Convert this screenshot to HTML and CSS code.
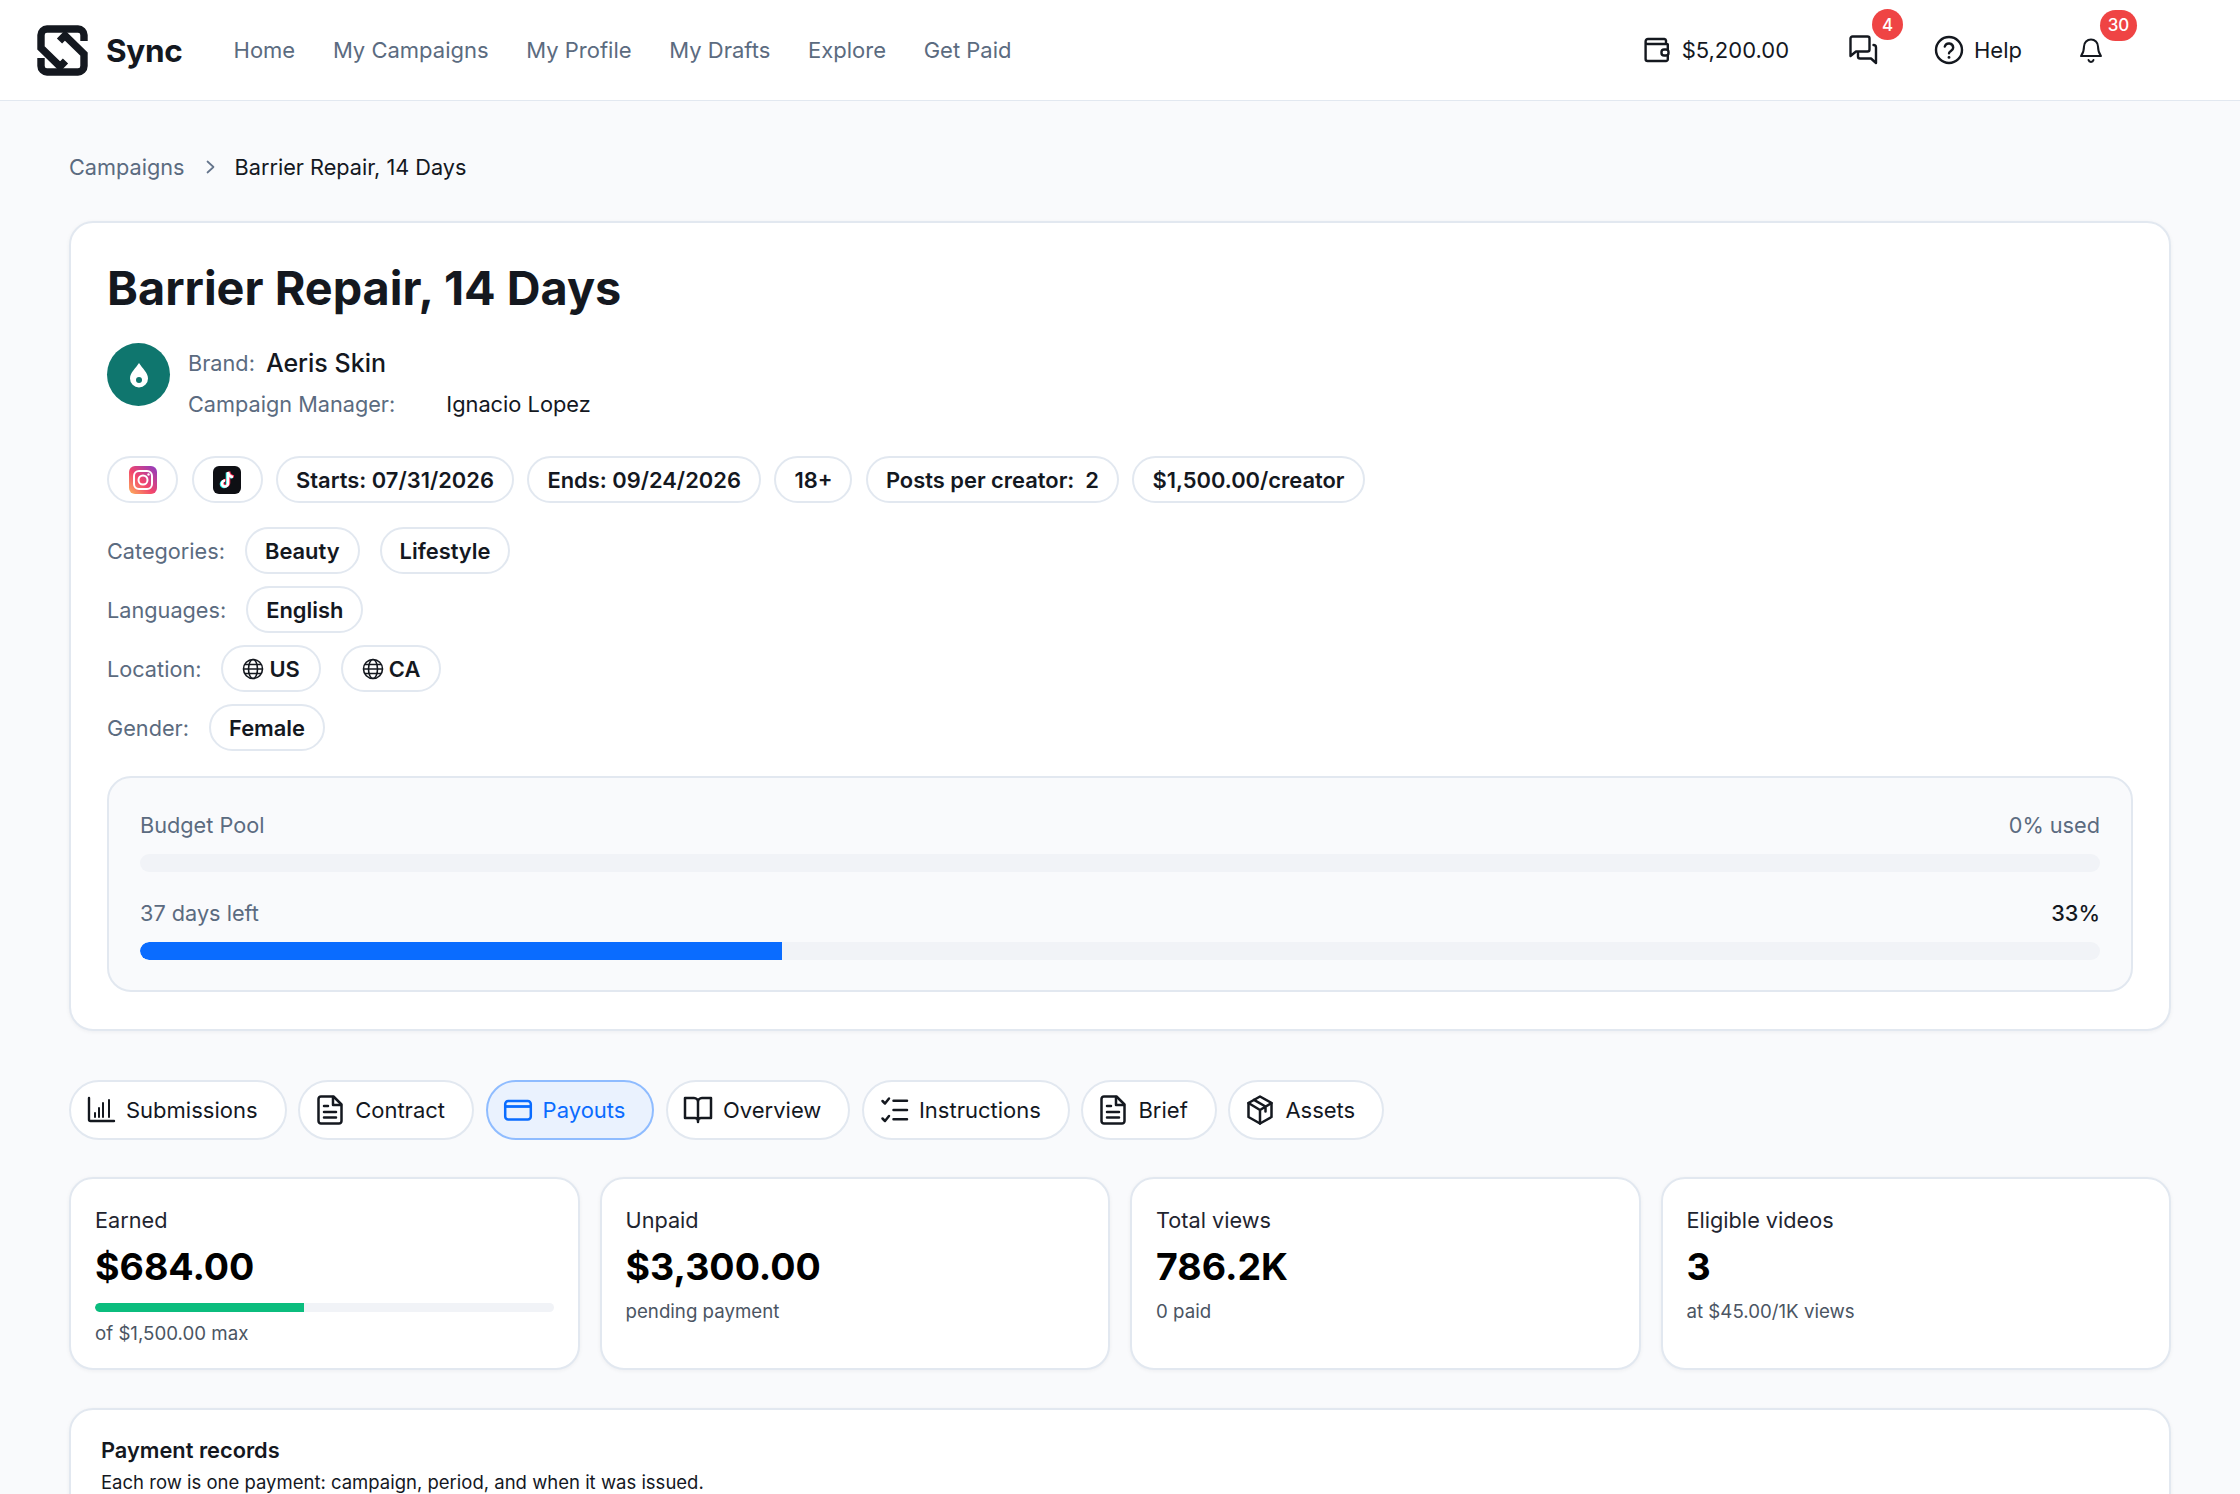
FILE: index.html
```html
<!DOCTYPE html>
<html lang="en">
<head>
<meta charset="utf-8">
<title>Barrier Repair, 14 Days</title>
<link rel="stylesheet" href="styles.css">
</head>
<body>
<header class="topbar">
  <a class="brand">
    <svg class="logo" viewBox="0 0 51 51" fill="none" stroke="#14181f" stroke-width="7.400" stroke-linejoin="miter"><path d="M47 16V10a6 6 0 0 0-6-6H10a6 6 0 0 0-6 6v13l19 18.500 5.500-5.500"/><path d="M4 33v8a6 6 0 0 0 6 6h31a6 6 0 0 0 6-6V29L28 10.500l-5.500 5.500"/></svg>
    <span>Sync</span>
  </a>
  <nav class="nav"><a>Home</a><a>My Campaigns</a><a>My Profile</a><a>My Drafts</a><a>Explore</a><a>Get Paid</a></nav>
  <div class="tools">
    <div class="tool wallet">
      <svg class="ico-w" viewBox="0 0 26 26" fill="none" stroke="#14181f" stroke-width="2.400" stroke-linejoin="round" stroke-linecap="round"><path d="M22 7V3.500A1.800 1.800 0 0 0 20 2H4a2.400 2.400 0 0 0-2.400 2.400V22a2 2 0 0 0 2 2H22a1.800 1.800 0 0 0 1.800-1.800V7.500A.8.800 0 0 0 23 7H3.600A2 2 0 0 1 1.600 4.600"/><rect x="17.500" y="12.500" width="7" height="6" rx="2.600" fill="#fff"/></svg>
      <span>$5,200.00</span>
    </div>
    <div class="tool chat">
      <svg class="ico-c" viewBox="0 0 30 30" fill="none" stroke="#14181f" stroke-width="2.400" stroke-linejoin="round" stroke-linecap="round"><path d="M4.500 1.500H19.500a2 2 0 0 1 2 2V14.500a2 2 0 0 1-2 2H8L2.500 21V3.500a2 2 0 0 1 2-2Z"/><path d="M25.500 10a2.500 2.500 0 0 1 2.500 2.500V28L23 23.500H12a2 2 0 0 1-2-2V18"/></svg>
      <span class="badge">4</span>
    </div>
    <div class="tool help">
      <svg class="ico-h" viewBox="0 0 30 30" fill="none" stroke="#14181f" stroke-width="2.400" stroke-linecap="round"><circle cx="15" cy="15" r="13"/><path d="M10.800 11.500a4.300 4.300 0 0 1 8.400 1.200c0 2.900-4.200 3.400-4.200 5.600"/><path d="M15 22.300v.1" stroke-width="2.800"/></svg>
      <span>Help</span>
    </div>
    <div class="tool bell">
      <svg class="ico-b" viewBox="0 0 24 25" fill="none" stroke="#14181f" stroke-width="2" stroke-linejoin="round" stroke-linecap="round"><path d="M12 1.500a7 7 0 0 0-7 7c0 5.500-1 7-3 9.500h20c-2-2.500-3-4-3-9.500a7 7 0 0 0-7-7Z"/><path d="M9.500 22a2.600 2.600 0 0 0 5 0"/></svg>
      <span class="badge wide">30</span>
    </div>
  </div>
</header>

<main class="page">
  <div class="crumbs">
    <span class="crumb-root">Campaigns</span>
    <svg class="crumb-sep" viewBox="0 0 9 14" fill="none" stroke="#64748b" stroke-width="1.700" stroke-linecap="round" stroke-linejoin="round"><path d="M1.500 1.500 7.500 7l-6 5.500"/></svg>
    <span class="crumb-cur">Barrier Repair, 14 Days</span>
  </div>

  <section class="card hero">
    <h1>Barrier Repair, 14 Days</h1>
    <div class="owner">
      <div class="avatar">
        <svg viewBox="0 0 20 26" width="20" height="26"><path d="M10 1c3 5 9 9.500 9 15.500a9 9 0 0 1-18 0C1 10.500 7 6 10 1Z" fill="#fff"/><circle cx="10" cy="18" r="3" fill="#0f766e"/></svg>
      </div>
      <div class="owner-text">
        <div class="owner-line"><span class="muted">Brand:</span><strong class="brand-name">Aeris Skin</strong></div>
        <div class="owner-line"><span class="muted">Campaign Manager:</span><span class="manager">Ignacio Lopez</span></div>
      </div>
    </div>

    <div class="chips">
      <span class="chip social">
        <svg viewBox="0 0 28 28" width="28" height="28"><defs><linearGradient id="ig" x1="0" y1="1" x2="1" y2="0"><stop offset="0" stop-color="#fdb35c"/><stop offset=".45" stop-color="#f2456c"/><stop offset="1" stop-color="#8a3ac4"/></linearGradient></defs><rect width="28" height="28" rx="6" fill="url(#ig)"/><rect x="5" y="5" width="18" height="18" rx="5" fill="none" stroke="#fff" stroke-width="2"/><circle cx="14" cy="14" r="4.500" fill="none" stroke="#fff" stroke-width="2"/><circle cx="19.500" cy="8.500" r="1.200" fill="#fff"/></svg>
      </span>
      <span class="chip social">
        <svg viewBox="0 0 28 28" width="28" height="28"><rect width="28" height="28" rx="6" fill="#0e0f14"/><path d="M15 6v11.500a3 3 0 1 1-3-3M15 6c.3 3 2.300 4.700 5 5" transform="translate(-1 .5)" fill="none" stroke="#25f4ee" stroke-width="2.600"/><path d="M15 6v11.500a3 3 0 1 1-3-3M15 6c.3 3 2.300 4.700 5 5" transform="translate(1 -.5)" fill="none" stroke="#fe2c55" stroke-width="2.600"/><path d="M15 6v11.500a3 3 0 1 1-3-3M15 6c.3 3 2.300 4.700 5 5" fill="none" stroke="#fff" stroke-width="2.600"/></svg>
      </span>
      <span class="chip">Starts: 07/31/2026</span>
      <span class="chip">Ends: 09/24/2026</span>
      <span class="chip">18+</span>
      <span class="chip">Posts per creator:&nbsp; 2</span>
      <span class="chip">$1,500.00/creator</span>
    </div>

    <div class="meta-row"><span class="muted">Categories:</span><span class="chip">Beauty</span><span class="chip">Lifestyle</span></div>
    <div class="meta-row"><span class="muted">Languages:</span><span class="chip">English</span></div>
    <div class="meta-row"><span class="muted">Location:</span>
      <span class="chip geo"><svg viewBox="0 0 22 22" width="22" height="22" fill="none" stroke="#14181f" stroke-width="1.600"><circle cx="11" cy="11" r="9.500"/><ellipse cx="11" cy="11" rx="4.500" ry="9.500"/><path d="M1.500 11h19M2.800 6.500h16.400M2.800 15.500h16.400"/></svg>US</span>
      <span class="chip geo"><svg viewBox="0 0 22 22" width="22" height="22" fill="none" stroke="#14181f" stroke-width="1.600"><circle cx="11" cy="11" r="9.500"/><ellipse cx="11" cy="11" rx="4.500" ry="9.500"/><path d="M1.500 11h19M2.800 6.500h16.400M2.800 15.500h16.400"/></svg>CA</span>
    </div>
    <div class="meta-row"><span class="muted">Gender:</span><span class="chip">Female</span></div>

    <div class="budget">
      <div class="budget-head"><span>Budget Pool</span><span>0% used</span></div>
      <div class="track"></div>
      <div class="budget-head second"><span>37 days left</span><span class="dark">33%</span></div>
      <div class="track"><div class="fill blue" style="width:32.75%"></div></div>
    </div>
  </section>

  <div class="tabs">
    <a class="tab"><svg class="tab-ico" viewBox="0 0 30 30" fill="none" stroke="currentColor" stroke-width="2.400" stroke-linecap="round" stroke-linejoin="round"><path d="M3 3v21.500A1.500 1.500 0 0 0 4.500 26H28"/><path d="M9 18v4M17 8v14M23 5v17M13 13v9" stroke-width="2"/></svg>Submissions</a>
    <a class="tab"><svg class="tab-ico" viewBox="0 0 30 30" fill="none" stroke="currentColor" stroke-width="2.500" stroke-linejoin="round" stroke-linecap="round"><path d="M18.500 1.500H6A2.500 2.500 0 0 0 3.500 4v22A2.500 2.500 0 0 0 6 28.500h18a2.500 2.500 0 0 0 2.500-2.500V9.500l-8-8Z"/><path d="M18 2v8h8M9 11h4M9 17h12M9 22.500h12"/></svg>Contract</a>
    <a class="tab active"><svg class="tab-ico" viewBox="0 0 30 30" fill="none" stroke="currentColor" stroke-width="2.500" stroke-linejoin="round"><rect x="2.200" y="6" width="25.600" height="18.500" rx="3"/><path d="M2 11.500h26" stroke-width="2.800"/></svg>Payouts</a>
    <a class="tab"><svg class="tab-ico" viewBox="0 0 30 30" fill="none" stroke="currentColor" stroke-width="2.500" stroke-linejoin="round" stroke-linecap="round"><path d="M15 7a4 4 0 0 0-4-4H2v20h10a3 3 0 0 1 3 3 3 3 0 0 1 3-3h10V3h-9a4 4 0 0 0-4 4Zm0 0v20"/></svg>Overview</a>
    <a class="tab"><svg class="tab-ico" viewBox="0 0 30 30" fill="none" stroke="currentColor" stroke-width="2.500" stroke-linejoin="round" stroke-linecap="round"><path d="m3.500 6 2.500 2.500 4-5M3.500 23.500 6 26l4-5M14.500 5.700H28M14.500 15H28M14.500 24.300H28"/></svg>Instructions</a>
    <a class="tab"><svg class="tab-ico" viewBox="0 0 30 30" fill="none" stroke="currentColor" stroke-width="2.500" stroke-linejoin="round" stroke-linecap="round"><path d="M18.500 1.500H6A2.500 2.500 0 0 0 3.500 4v22A2.500 2.500 0 0 0 6 28.500h18a2.500 2.500 0 0 0 2.500-2.500V9.500l-8-8Z"/><path d="M18 2v8h8M9 11h4M9 17h12M9 22.500h12"/></svg>Brief</a>
    <a class="tab"><svg class="tab-ico" viewBox="0 0 30 30" fill="none" stroke="currentColor" stroke-width="2.500" stroke-linejoin="round" stroke-linecap="round"><path d="M15 1.500 3.500 8v14L15 28.500 26.500 22V8L15 1.500Z"/><path d="M3.500 8 15 15l11.500-7M15 15v13.500M9 4.800 20.500 11.500v5"/></svg>Assets</a>
  </div>

  <div class="stats">
    <div class="card stat">
      <div class="stat-label">Earned</div>
      <div class="stat-value">$684.00</div>
      <div class="stat-track"><div class="fill green" style="width:45.6%"></div></div>
      <div class="stat-note tight">of $1,500.00 max</div>
    </div>
    <div class="card stat">
      <div class="stat-label">Unpaid</div>
      <div class="stat-value">$3,300.00</div>
      <div class="stat-note">pending payment</div>
    </div>
    <div class="card stat">
      <div class="stat-label">Total views</div>
      <div class="stat-value">786.2K</div>
      <div class="stat-note">0 paid</div>
    </div>
    <div class="card stat">
      <div class="stat-label">Eligible videos</div>
      <div class="stat-value">3</div>
      <div class="stat-note">at $45.00/1K views</div>
    </div>
  </div>

  <section class="card records">
    <h2>Payment records</h2>
    <p>Each row is one payment: campaign, period, and when it was issued.</p>
  </section>
</main>
</body>
</html>
```
FILE: styles.css
```css
* { box-sizing: border-box; }
html, body { margin: 0; height: 100%; overflow: hidden; }
body { background: #f9fafc; color: #14181f; font-family: Inter, "Liberation Sans", sans-serif; font-size: 22px; }
svg { display: block; flex: none; }

.topbar { height: 101px; background: #fff; border-bottom: 1px solid #e2e8f0; display: flex; align-items: center; padding-left: 37px; }
.brand { display: flex; align-items: center; gap: 18px; font-size: 31.500px; font-weight: 700; letter-spacing: -.3px; }
.logo { width: 51px; height: 51px; }
.nav { display: flex; gap: 37.700px; margin-left: 51px; color: #5b6b80; font-size: 22px; }
.tools { margin-left: auto; display: flex; align-items: center; height: 100%; padding-right: 137px; font-size: 22px; }
.tool { position: relative; display: flex; align-items: center; }
.wallet { gap: 12px; }
.ico-w { width: 26px; height: 26px; }
.chat { margin-left: 59px; }
.ico-c { width: 30px; height: 30px; }
.help { margin-left: 56px; gap: 10px; }
.ico-h { width: 30px; height: 30px; }
.bell { margin-left: 57px; }
.ico-b { width: 24px; height: 25px; }
.badge { position: absolute; left: 24px; top: -26px; min-width: 31px; height: 31px; border-radius: 16px; background: #ef4444; color: #fff; font-size: 17px; font-weight: 500; display: flex; align-items: center; justify-content: center; }
.badge.wide { left: 21px; top: -28px; min-width: 37px; }

.page { padding: 0 69px; }
.crumbs { height: 120px; padding-top: 52px; display: flex; align-items: flex-start; font-size: 21.700px; line-height: 28px; }
.crumb-root { color: #5b6b80; }
.crumb-sep { width: 9px; height: 14px; margin: 7px 20px 0 21px; }

.card { background: #fff; border: 2px solid #e2e8f0; border-radius: 24px; box-shadow: 0 1px 4px rgba(15, 23, 42, .05); }
.hero { height: 810px; padding: 36px 36px 0; }
h1 { margin: 0; font-size: 46.800px; line-height: 58px; font-weight: 700; }
.muted { color: #5b6b80; font-size: 21.700px; }
.owner { display: flex; gap: 18px; margin-top: 26px; }
.avatar { width: 63px; height: 63px; border-radius: 50%; background: #0f766e; display: flex; align-items: center; justify-content: center; }
.owner-text { display: flex; flex-direction: column; gap: 9px; margin-top: 4px; }
.owner-line { display: flex; align-items: center; height: 32px; }
.brand-name { font-size: 25px; font-weight: 500; margin-left: 11px; }
.manager { font-size: 21.800px; margin-left: 51px; }

.chips { display: flex; gap: 13.500px; margin-top: 36px; }
.chip { height: 47px; padding: 0 18px; border: 2px solid #e2e8f0; border-radius: 24px; background: #fff; display: inline-flex; align-items: center; font-size: 21.900px; font-weight: 600; }
.social { width: 71px; justify-content: center; padding: 0; }
.geo { gap: 5px; padding: 0 19px; }
.meta-row { display: flex; align-items: center; gap: 20px; margin-top: 12px; }
.chips + .meta-row { margin-top: 24px; }

.budget { margin-top: 25px; height: 216px; background: #f9fafc; border: 2px solid #e2e8f0; border-radius: 24px; padding: 33px 31px 0; font-size: 21.700px; color: #5b6b80; }
.budget-head { display: flex; justify-content: space-between; line-height: 28px; margin-bottom: 15px; }
.budget-head.second { margin-top: 27px; margin-bottom: 15px; }
.dark { color: #14181f; font-weight: 500; }
.track { height: 18px; background: #f1f3f7; border-radius: 9px; overflow: hidden; }
.fill { height: 100%; }
.blue { background: #0a6cff; border-radius: 9px 0 0 9px; }
.green { background: #0bbd7e; border-radius: 5px 0 0 5px; }

.tabs { display: flex; gap: 11.600px; margin-top: 49px; }
.tab { height: 60px; padding: 0 27px 0 15px; border: 2px solid #e2e8f0; border-radius: 30px; background: #fff; display: flex; align-items: center; gap: 10px; font-size: 22px; font-weight: 400; }
.tab-ico { width: 30px; height: 30px; }
.tab.active { background: #eaf2fe; border-color: #8fbcff; color: #0a6cff; }

.stats { display: grid; grid-template-columns: repeat(4, 1fr); gap: 20px; margin-top: 37px; }
.stat { height: 193px; padding: 27px 24px 0; }
.stat-label { font-size: 21.700px; line-height: 28px; color: #1f2530; }
.stat-value { font-size: 37.500px; line-height: 48px; font-weight: 700; color: #000; margin-top: 9px; }
.stat-track { height: 9px; background: #f1f3f7; border-radius: 5px; overflow: hidden; margin-top: 12px; }
.stat-note { font-size: 18.700px; line-height: 24px; color: #4b5563; margin-top: 9px; }
.stat-note.tight { margin-top: 10px; }

.records { margin-top: 38px; height: 400px; padding: 25px 30px; }
h2 { margin: 0; font-size: 21.800px; line-height: 30px; font-weight: 600; }
.records p { margin: 3px 0 0; font-size: 18.500px; line-height: 28px; }
```
